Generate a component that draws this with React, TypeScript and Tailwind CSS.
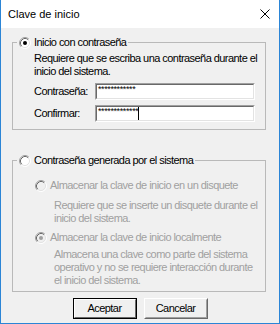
import React from 'react';

const Radio: React.FC<{ checked?: boolean; disabled?: boolean }> = ({ checked, disabled }) => (
  <svg width="12" height="12" viewBox="0 0 12 12" className="shrink-0">
    <circle cx="6" cy="6" r="5" fill={disabled ? '#f0f0f0' : '#ffffff'} />
    <path d="M9.89 2.11 A5.5 5.5 0 0 0 2.11 9.89" fill="none" stroke="#a0a0a0" />
    <path d="M2.11 9.89 A5.5 5.5 0 0 0 9.89 2.11" fill="none" stroke="#ffffff" />
    <path d="M9.18 2.82 A4.5 4.5 0 0 0 2.82 9.18" fill="none" stroke="#696969" />
    <path d="M2.82 9.18 A4.5 4.5 0 0 0 9.18 2.82" fill="none" stroke="#e3e3e3" />
    {checked && <circle cx="6" cy="6" r="2" fill={disabled ? '#a0a0a0' : '#000000'} />}
  </svg>
);

const PasswordField: React.FC<{ stars: string; caret?: boolean }> = ({ stars, caret }) => (
  <div className="w-[160px] h-[17px] border border-t-[#a0a0a0] border-l-[#a0a0a0] border-b-white border-r-white">
    <div className="h-full bg-white border border-t-[#696969] border-l-[#696969] border-b-[#e3e3e3] border-r-[#e3e3e3] flex items-start pl-[1px]">
      <span className="text-[9px] leading-[9px] tracking-[-0.4px] text-black">{stars}</span>
      {caret && <span className="w-px h-[13px] bg-black mt-[0px]" />}
    </div>
  </div>
);

export default function App() {
  return (
    <div className="w-[280px] h-[324px] flex flex-col border-x border-b border-[#2b85d6] bg-[#f0f0f0] text-[11px] leading-[13px] text-black tracking-[-0.55px] font-['Liberation_Sans',Arial,sans-serif] overflow-hidden">
      {/* Title bar */}
      <div className="h-[28px] shrink-0 bg-white flex items-center justify-between pl-[7px] pr-[9px]">
        <span className="text-[11px] tracking-normal">Clave de inicio</span>
        <svg width="10" height="10" viewBox="0 0 10 10">
          <path d="M0.5 0.5 L9.5 9.5 M9.5 0.5 L0.5 9.5" stroke="#000" strokeWidth="1" />
        </svg>
      </div>

      <div className="flex-1 flex flex-col pl-[11px] pt-[8px]">
        {/* Group 1 */}
        <fieldset className="w-[254px] border border-[#b9b9b9]">
          <legend className="ml-[4px] px-[2px] h-[13px] flex items-center gap-[3px]">
            <Radio checked />
            <span>Inicio con contraseña</span>
          </legend>
          <div className="pl-[21px] pb-[7px]">
            <p className="mt-[3px]">
              Requiere que se escriba una contraseña durante el
              <br />
              inicio del sistema.
            </p>
            <div className="mt-[5px] flex items-center">
              <span className="w-[61px]">Contraseña:</span>
              <PasswordField stars="************" />
            </div>
            <div className="mt-[5px] flex items-center">
              <span className="w-[61px]">Confirmar:</span>
              <PasswordField stars="*************" caret />
            </div>
          </div>
        </fieldset>

        {/* Group 2 */}
        <fieldset className="mt-[24px] w-[254px] border border-[#b9b9b9]">
          <legend className="ml-[4px] px-[2px] h-[13px] flex items-center gap-[3px]">
            <Radio />
            <span>Contraseña generada por el sistema</span>
          </legend>
          <div className="pl-[22px] pb-[4px] text-[#a0a0a0]">
            <div className="mt-[12px] flex items-center gap-[3px]">
              <Radio disabled />
              <span>Almacenar la clave de inicio en un disquete</span>
            </div>
            <p className="mt-[7px] pl-[19px]">
              Requiere que se inserte un disquete durante el
              <br />
              inicio del sistema.
            </p>
            <div className="mt-[6px] flex items-center gap-[3px]">
              <Radio checked disabled />
              <span>Almacenar la clave de inicio localmente</span>
            </div>
            <p className="mt-[4px] pl-[19px]">
              Almacena una clave como parte del sistema
              <br />
              operativo y no se requiere interacción durante
              <br />
              el inicio del sistema.
            </p>
          </div>
        </fieldset>

        {/* Buttons */}
        <div className="mt-[6px] flex justify-center gap-[7px] pr-[11px]">
          <button className="w-[64px] h-[21px] border border-black bg-[#f0f0f0] p-0">
            <div className="h-full border border-t-white border-l-white border-b-[#696969] border-r-[#696969] flex items-center justify-center">
              Aceptar
            </div>
          </button>
          <button className="w-[64px] h-[21px] border border-t-white border-l-white border-b-[#696969] border-r-[#696969] bg-[#f0f0f0] p-0">
            <div className="h-full border border-t-[#f0f0f0] border-l-[#f0f0f0] border-b-[#a0a0a0] border-r-[#a0a0a0] flex items-center justify-center">
              Cancelar
            </div>
          </button>
        </div>
      </div>
    </div>
  );
}
